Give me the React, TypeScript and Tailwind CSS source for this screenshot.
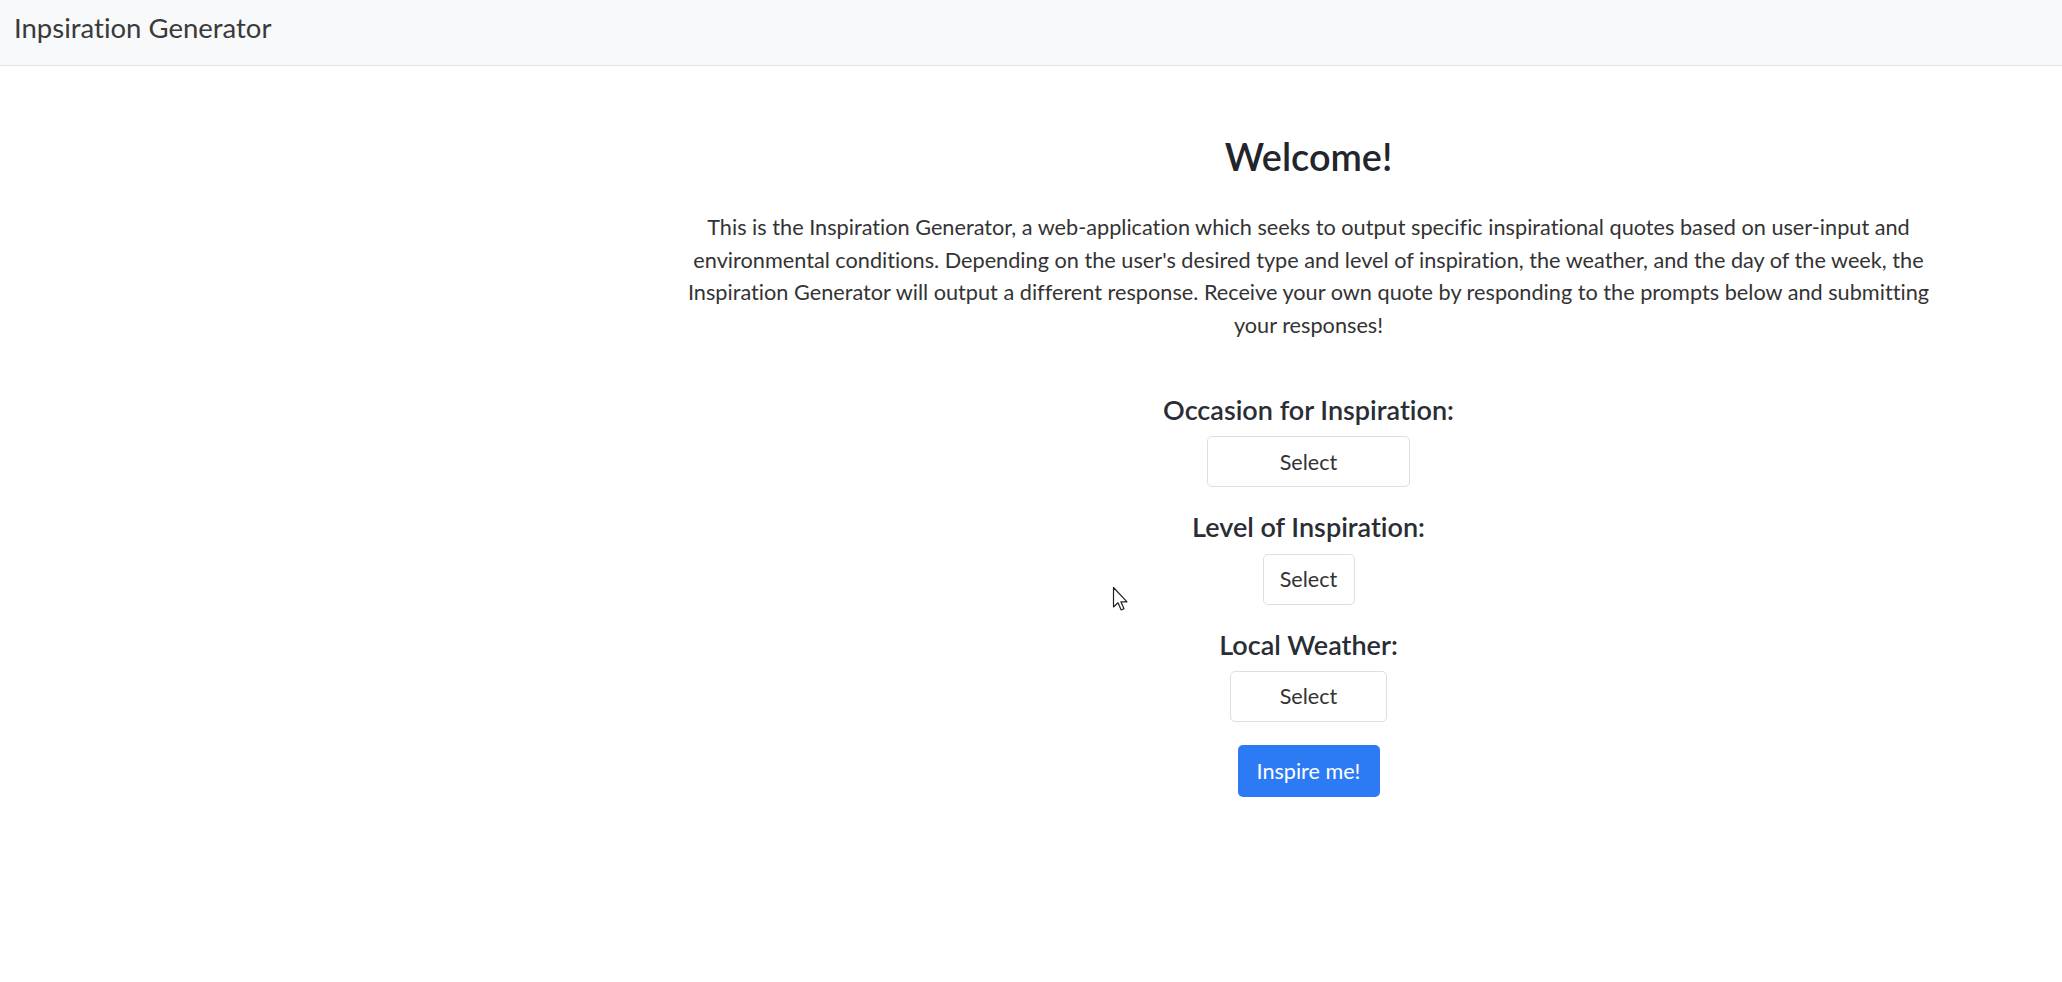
import React from 'react';

const prompts = [
  { label: 'Occasion for Inspiration:', width: 'w-[203px]' },
  { label: 'Level of Inspiration:', width: 'w-[92px]' },
  { label: 'Local Weather:', width: 'w-[157px]' },
];

function Cursor() {
  return (
    <svg
      className="absolute left-[1112px] top-[586px] pointer-events-none"
      width="20"
      height="28"
      viewBox="0 0 20 28"
    >
      <path
        d="M1.5 1.5 L1.5 21 L6 16.8 L9.2 24 L12 22.8 L8.9 15.8 L15 15.8 Z"
        fill="#fff"
        stroke="#222"
        strokeWidth="1.2"
        strokeLinejoin="round"
      />
    </svg>
  );
}

export default function App() {
  return (
    <div className="relative min-h-[982px] bg-white text-[#212529] font-['Lato','Liberation_Sans',sans-serif] [font-variant-ligatures:none]">
      {/* Navbar */}
      <nav className="h-[66px] bg-[#f8f9fa] border-b border-[#e3e3e3] flex items-center px-[14px] pb-[10px]">
        <span className="text-[27.5px] text-[#3a3a3a] leading-none">Inpsiration Generator</span>
      </nav>

      {/* Main */}
      <main className="ml-[675px] w-[1267px] flex flex-col items-center text-center">
        <h3 className="mt-[68px] text-[37.8px] leading-[1.2] font-semibold text-[#22252b]">Welcome!</h3>
        <p className="mt-[32px] text-[21.7px] leading-[32.4px] text-[#333]">
          This is the Inspiration Generator, a web-application which seeks to output specific inspirational quotes based on user-input and
          <br />
          environmental conditions. Depending on the user's desired type and level of inspiration, the weather, and the day of the week, the
          <br />
          Inspiration Generator will output a different response. Receive your own quote by responding to the prompts below and submitting
          <br />
          your responses!
        </p>

        <div className="mt-[53px] flex flex-col items-center gap-[24px]">
          {prompts.map((p) => (
            <div key={p.label} className="flex flex-col items-center">
              <h5 className="text-[27px] leading-[1.2] font-semibold mb-[10px] text-[#2a2d33]">{p.label}</h5>
              <button
                className={`${p.width} h-[51px] border border-[#dcdfe3] rounded-[5px] bg-white text-[21.6px] text-[#333]`}
              >
                Select
              </button>
            </div>
          ))}
        </div>

        <button className="mt-[23px] w-[142px] h-[52px] rounded-[5px] bg-[#2d7bf4] text-white text-[21.6px]">
          Inspire me!
        </button>
      </main>

      <Cursor />
    </div>
  );
}
